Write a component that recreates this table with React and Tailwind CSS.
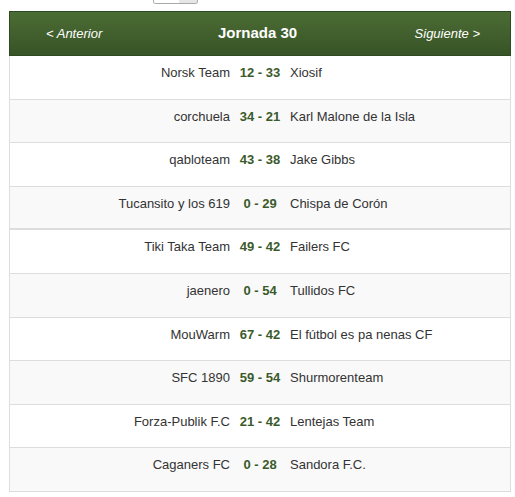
import React from 'react';

const matches = [
  { home: 'Norsk Team', score: '12 - 33', away: 'Xiosif' },
  { home: 'corchuela', score: '34 - 21', away: 'Karl Malone de la Isla' },
  { home: 'qabloteam', score: '43 - 38', away: 'Jake Gibbs' },
  { home: 'Tucansito y los 619', score: '0 - 29', away: 'Chispa de Corón', split: true },
  { home: 'Tiki Taka Team', score: '49 - 42', away: 'Failers FC' },
  { home: 'jaenero', score: '0 - 54', away: 'Tullidos FC' },
  { home: 'MouWarm', score: '67 - 42', away: 'El fútbol es pa nenas CF' },
  { home: 'SFC 1890', score: '59 - 54', away: 'Shurmorenteam' },
  { home: 'Forza-Publik F.C', score: '21 - 42', away: 'Lentejas Team' },
  { home: 'Caganers FC', score: '0 - 28', away: 'Sandora F.C.' },
];

export default function App() {
  return (
    <div className="w-[515px] h-[497px] bg-white overflow-hidden font-['Liberation_Sans',Arial,sans-serif] text-[13px] text-[#333]">
      <div className="h-[11px] pl-[153px]">
        <div className="w-[45px] h-[4px] flex border border-t-0 border-[#aaa] rounded-b-[3px] overflow-hidden">
          <div className="flex-1 bg-white" />
          <div className="w-[18px] bg-[#e6e6e6]" />
        </div>
      </div>
      <div className="ml-[9px] w-[502px]">
        <div className="h-[45px] grid grid-cols-[1fr_auto_1fr] items-center pl-[31px] pr-[36px] border border-[#2f4a22] bg-gradient-to-b from-[#4b6c34] to-[#385427] text-white">
          <span className="italic ml-[5px]">&lt; Anterior</span>
          <span className="font-bold text-[15px]">Jornada 30</span>
          <span className="italic text-right -mr-[6px]">Siguiente &gt;</span>
        </div>
        <div className="border-x border-[#ddd]">
          {matches.map((m, i) => (
            <div
              key={i}
              className={`grid grid-cols-[1fr_50px_1fr] h-[43.6px] pt-[7px] leading-[19px] border-[#ddd] ${i % 2 ? 'bg-[#f9f9f9]' : 'bg-white'} ${m.split ? 'border-b-2' : 'border-b'}`}
            >
              <span className="text-right pr-[5px] whitespace-nowrap">{m.home}</span>
              <span className="text-center font-bold text-[#3b5a2b] whitespace-nowrap">{m.score}</span>
              <span className="pl-[5px] whitespace-nowrap">{m.away}</span>
            </div>
          ))}
        </div>
      </div>
    </div>
  );
}
